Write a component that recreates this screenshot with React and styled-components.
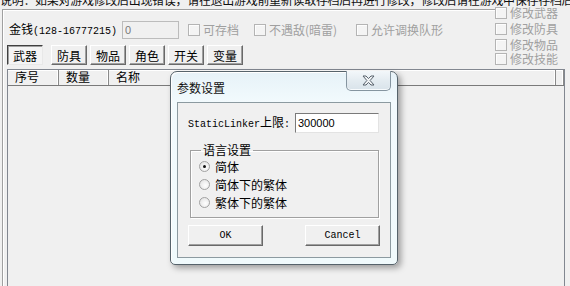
import React from 'react';
import styled, { createGlobalStyle } from 'styled-components';

const GlobalStyle = createGlobalStyle`
  html, body {
    margin: 0;
    padding: 0;
    background: #f0f0f0;
  }
  body {
    font-family: "Noto Sans CJK SC", sans-serif;
    font-size: 12px;
    color: #000;
  }
`;

const tabs = ['武器', '防具', '物品', '角色', '开关', '变量'];
const topChecks = [
  { label: '可存档', w: 66 },
  { label: '不遇敌(暗雷)', w: 102 },
  { label: '允许调换队形', w: 100 },
];
const sideChecks = [
  { label: '修改武器', h: 16 },
  { label: '修改防具', h: 16 },
  { label: '修改物品', h: 14 },
  { label: '修改技能', h: 14 },
];
const langs = ['简体', '简体下的繁体', '繁体下的繁体'];

const CloseGlyph = () => (
  <svg width="13" height="11" viewBox="-1 -1 13 11">
    <path
      d="M0,0 H3 L5.5,2.6 L8,0 H11 L7.1,4.5 L11,9 H8 L5.5,6.4 L3,9 H0 L3.9,4.5 Z"
      fill="#f4f6f8"
      stroke="#56616b"
      strokeWidth="1"
      strokeLinejoin="round"
    />
  </svg>
);

export default function App() {
  return (
    <Page>
      <GlobalStyle />
      <TopStrip>
        <StripText>
          说明：如果对游戏修改后出现错误，请在退出游戏前重新读取存档后再进行修改，修改后请在游戏中保存存档后再关闭本程序，部分功能需进入游戏后才生效。
        </StripText>
      </TopStrip>

      <Frame>
        <TopArea>
          <LeftStack>
            <MoneyRow>
              <Label>
                金钱<Mono>(128-16777215)</Mono>
              </Label>
              <NumInput readOnly disabled value="0" />
              {topChecks.map((c) => (
                <CheckItem key={c.label} $w={c.w}>
                  <Box />
                  <DimText>{c.label}</DimText>
                </CheckItem>
              ))}
            </MoneyRow>
            <TabRow>
              {tabs.map((t, i) => (
                <TabButton key={t} $pressed={i === 0}>
                  {t}
                </TabButton>
              ))}
            </TabRow>
          </LeftStack>
          <SideChecks>
            {sideChecks.map((c) => (
              <SideCheck key={c.label} $h={c.h}>
                <Box />
                <DimText>{c.label}</DimText>
              </SideCheck>
            ))}
          </SideChecks>
        </TopArea>

        <ListView>
          <ListHeader>
            <HeadCell $w={51}>序号</HeadCell>
            <HeadCell $w={50}>数量</HeadCell>
            <HeadCell $grow>名称</HeadCell>
            <HeadCell $w={7} />
          </ListHeader>
          <ListBody />
        </ListView>
      </Frame>

      <Dialog>
        <TitleBar>
          <TitleText>参数设置</TitleText>
          <CloseButton>
            <CloseGlyph />
          </CloseButton>
        </TitleBar>
        <Client>
          <FieldRow>
            <FieldLabel>
              <Mono>StaticLinker</Mono>上限<Mono>:</Mono>
            </FieldLabel>
            <ValueInput readOnly value="300000" />
          </FieldRow>
          <Group>
            <Legend>语言设置</Legend>
            {langs.map((l, i) => (
              <RadioRow key={l}>
                <Radio $on={i === 0} />
                <span>{l}</span>
              </RadioRow>
            ))}
          </Group>
          <ButtonRow>
            <DlgButton>OK</DlgButton>
            <DlgButton>Cancel</DlgButton>
          </ButtonRow>
        </Client>
      </Dialog>
    </Page>
  );
}

const Page = styled.div`
  position: relative;
  width: 570px;
  height: 286px;
  overflow: hidden;
  background: #f0f0f0;
`;

const TopStrip = styled.div`
  height: 9px;
  overflow: hidden;
  white-space: nowrap;
`;

const StripText = styled.div`
  margin-top: -7px;
  line-height: 14px;
  font-size: 12px;
  color: #111;
  letter-spacing: -0.3px;
`;

const Frame = styled.div`
  display: flex;
  flex-direction: column;
  height: 277px;
  margin-left: 2px;
  border-top: 1px solid #a0a0a0;
  border-left: 1px solid #a0a0a0;
  box-shadow: inset 1px 1px 0 #fff;
`;

const TopArea = styled.div`
  display: flex;
  align-items: flex-start;
`;

const LeftStack = styled.div`
  display: flex;
  flex-direction: column;
`;

const MoneyRow = styled.div`
  display: flex;
  align-items: center;
  height: 18px;
  padding: 11px 0 0 6px;
`;

const Label = styled.span`
  line-height: 14px;
  margin-right: 5px;
`;

const Mono = styled.span`
  font-family: "Liberation Mono", monospace;
  font-size: 10px;
`;

const NumInput = styled.input`
  box-sizing: border-box;
  width: 57px;
  height: 18px;
  margin: 0 9px 0 0;
  padding: 0 2px;
  border: 1px solid #bcbcbc;
  background: #f0f0f0;
  color: #7a7a7a;
  font-family: "Liberation Sans", sans-serif;
  font-size: 11px;
  line-height: 14px;
  outline: none;
`;

const CheckItem = styled.div`
  display: flex;
  align-items: center;
  gap: 3px;
  width: ${(p) => p.$w}px;
  flex: none;
`;

const Box = styled.span`
  box-sizing: border-box;
  width: 12px;
  height: 12px;
  flex: none;
  border: 1px solid #b4b4b4;
  background: #f4f4f4;
  box-shadow: inset 1px 1px 0 #fdfdfd;
`;

const DimText = styled.span`
  color: #a0a0a0;
  line-height: 14px;
  white-space: nowrap;
`;

const TabRow = styled.div`
  display: flex;
  gap: 3px;
  margin: 6px 0 0 4px;
`;

const TabButton = styled.div`
  box-sizing: border-box;
  width: 36px;
  height: 20px;
  margin-right: ${(p) => (p.$pressed ? '5px' : '0')};
  display: flex;
  align-items: center;
  justify-content: center;
  font-size: 12px;
  background: ${(p) => (p.$pressed ? '#f4f4f4' : '#f0f0f0')};
  border: 1px solid;
  border-color: ${(p) =>
    p.$pressed ? '#404040 #e8e8e8 #e8e8e8 #404040' : '#ffffff #696969 #696969 #ffffff'};
  box-shadow: ${(p) =>
    p.$pressed ? 'inset 1px 1px 0 #a0a0a0' : 'inset -1px -1px 0 #a0a0a0'};
`;

const SideChecks = styled.div`
  position: relative;
  display: flex;
  flex-direction: column;
  width: 75px;
  margin: -4px 0 0 auto;
`;

const SideCheck = styled.div`
  display: flex;
  align-items: flex-start;
  gap: 3px;
  height: ${(p) => p.$h}px;
  background: #f0f0f0;
  & > span:first-child {
    margin-top: 1px;
  }
`;

const ListView = styled.div`
  flex: 1;
  display: flex;
  flex-direction: column;
  width: 558px;
  box-sizing: border-box;
  margin: 3px 0 0 4px;
  border: 1px solid #828790;
  border-bottom: none;
`;

const ListHeader = styled.div`
  display: flex;
  height: 15px;
  border-bottom: 1px solid #7a7a7a;
  box-shadow: inset 0 1px 0 #fff;
`;

const HeadCell = styled.div`
  box-sizing: border-box;
  width: ${(p) => (p.$w ? `${p.$w}px` : 'auto')};
  flex: ${(p) => (p.$grow ? '1' : 'none')};
  padding-left: 7px;
  line-height: 14px;
  border-right: 1px solid #8a8a8a;
  box-shadow: inset -1px 0 0 #fff;
`;

const ListBody = styled.div`
  flex: 1;
  background: #f0f0f0;
`;

const Dialog = styled.div`
  position: absolute;
  left: 170px;
  top: 71px;
  width: 228px;
  height: 194px;
  box-sizing: border-box;
  display: flex;
  flex-direction: column;
  border: 1px solid #56636b;
  border-radius: 7px 7px 5px 5px;
  background: linear-gradient(180deg, #e6f2f8 0px, #f2fafd 30px, #f0fafc 100%);
  box-shadow: inset 1px 1px 0 #ffffff, 3px 3px 6px rgba(0, 0, 0, 0.35);
`;

const TitleBar = styled.div`
  position: relative;
  height: 30px;
  display: flex;
  align-items: center;
  padding-left: 6px;
`;

const TitleText = styled.span`
  font-size: 12px;
  color: #111;
  margin-top: 1px;
`;

const CloseButton = styled.div`
  position: absolute;
  top: -1px;
  right: 6px;
  width: 45px;
  height: 20px;
  box-sizing: border-box;
  display: flex;
  align-items: center;
  justify-content: center;
  border: 1px solid #8595a0;
  border-top: none;
  border-radius: 0 0 5px 5px;
  background: linear-gradient(180deg, #f3f7fa 0%, #e4ecf1 50%, #d9e3ea 100%);
  box-shadow: inset 0 -1px 0 #f8fbfd;
`;

const Client = styled.div`
  flex: 1;
  margin: 0 6px 6px 6px;
  border: 1px solid #8c9aa0;
  background: #f0f0f0;
  display: flex;
  flex-direction: column;
`;

const FieldRow = styled.div`
  display: flex;
  align-items: center;
  padding: 10px 0 0 10px;
`;

const FieldLabel = styled.span`
  width: 107px;
  line-height: 14px;
`;

const ValueInput = styled.input`
  box-sizing: border-box;
  width: 84px;
  height: 20px;
  margin: 0;
  padding: 0 2px;
  border: 1px solid #7a7a7a;
  border-right-color: #e3e3e3;
  border-bottom-color: #e3e3e3;
  background: #fff;
  font-family: "Liberation Sans", sans-serif;
  font-size: 11px;
  color: #000;
  outline: none;
`;

const Group = styled.fieldset`
  box-sizing: border-box;
  width: 189px;
  margin: 10px 0 0 12px;
  padding: 0 0 6px 8px;
  border: 1px solid #a0a0a0;
  box-shadow: 1px 1px 0 #fff, inset 1px 1px 0 #fff;
`;

const Legend = styled.legend`
  margin-left: 2px;
  padding: 0 2px;
  line-height: 14px;
  font-size: 12px;
`;

const RadioRow = styled.div`
  display: flex;
  align-items: center;
  gap: 5px;
  height: 18px;
`;

const Radio = styled.span`
  position: relative;
  box-sizing: border-box;
  width: 11px;
  height: 11px;
  border-radius: 50%;
  border: 1px solid #a2a2a2;
  background: radial-gradient(circle at 60% 60%, #ffffff 0%, #e8e8e8 70%, #d8d8d8 100%);
  &::after {
    content: '';
    display: ${(p) => (p.$on ? 'block' : 'none')};
    position: absolute;
    left: 3px;
    top: 3px;
    width: 3px;
    height: 3px;
    border-radius: 50%;
    background: #111;
  }
`;

const ButtonRow = styled.div`
  display: flex;
  justify-content: space-between;
  padding: 7px 10px 0 10px;
`;

const DlgButton = styled.div`
  box-sizing: border-box;
  width: 75px;
  height: 21px;
  display: flex;
  align-items: center;
  justify-content: center;
  font-family: "Liberation Mono", monospace;
  font-size: 10px;
  background: #f0f0f0;
  border: 1px solid;
  border-color: #ffffff #696969 #696969 #ffffff;
  box-shadow: inset -1px -1px 0 #a0a0a0;
`;
